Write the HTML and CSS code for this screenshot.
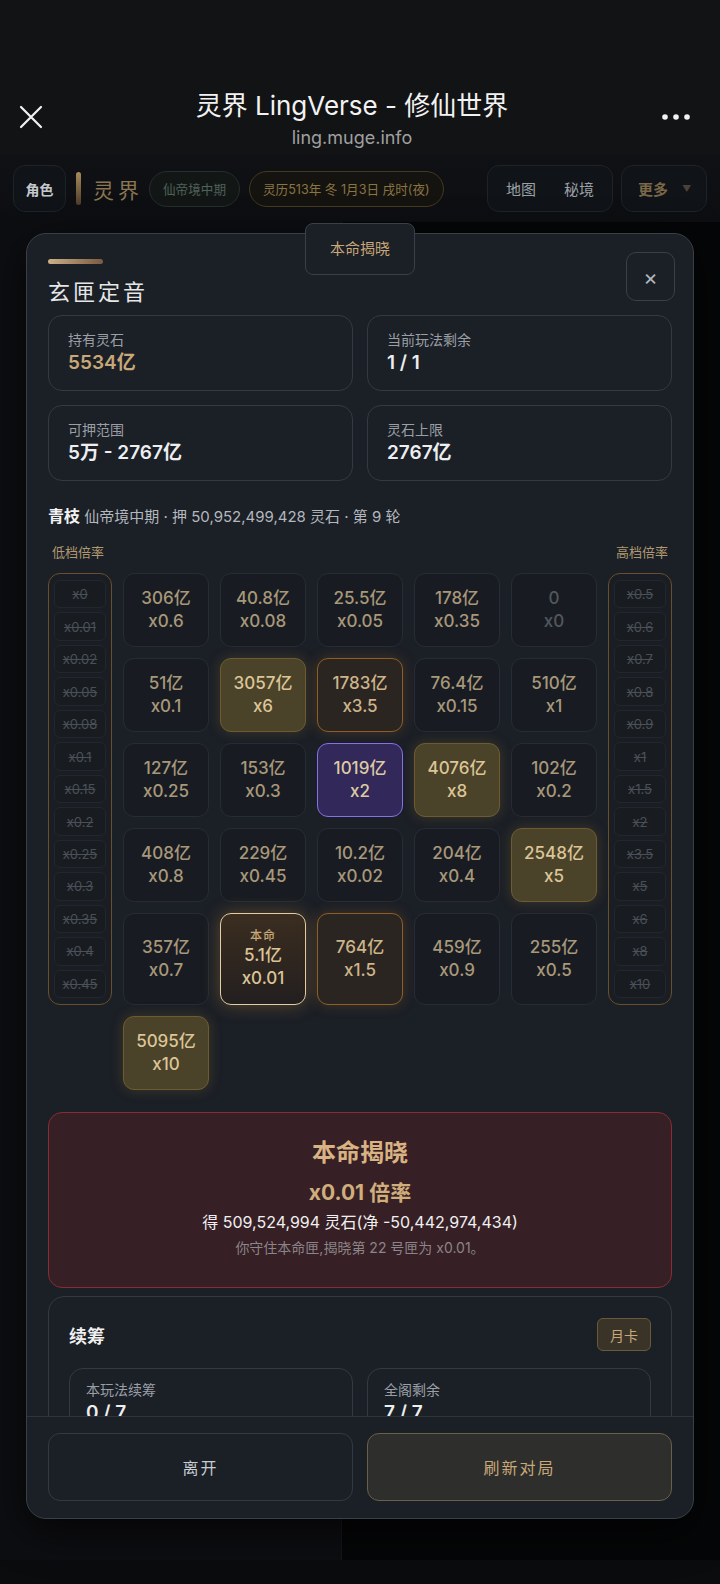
FILE: index.html
```html
<!DOCTYPE html>
<html lang="zh-CN">
<head>
    <meta charset="UTF-8">
    <meta name="viewport" content="width=device-width, initial-scale=1.0">
    <title>灵界 LingVerse - 修仙世界</title>
    <link rel="stylesheet" href="styles.css">
</head>
<body>
    <!-- browser bar -->
    <header class="browser-bar">
        <span class="bb-close">
            <svg width="24" height="24" viewBox="0 0 24 24"><path d="M2 2 L22 22 M22 2 L2 22" stroke="#f2f2f2" stroke-width="2.2" stroke-linecap="round" fill="none"/></svg>
        </span>
        <div class="bb-title">
            <div class="bb-name">灵界 LingVerse - 修仙世界</div>
            <div class="bb-url">ling.muge.info</div>
        </div>
        <span class="bb-more">
            <svg width="30" height="8" viewBox="0 0 30 8"><circle cx="4" cy="4" r="2.8" fill="#f2f2f2"/><circle cx="15" cy="4" r="2.8" fill="#f2f2f2"/><circle cx="26" cy="4" r="2.8" fill="#f2f2f2"/></svg>
        </span>
    </header>

    <nav class="app-nav">
        <div class="nav-btn">角色</div>
        <div class="brand"><span class="brand-bar"></span><span class="brand-name">灵界</span></div>
        <span class="pill pill-realm">仙帝境中期</span>
        <span class="pill pill-date">灵历513年 冬 1月3日 戌时(夜)</span>
        <div class="nav-group"><span>地图</span><span>秘境</span></div>
        <div class="nav-more"><span>更多</span><span class="caret">▼</span></div>
    </nav>

    <main class="page">
        <div class="page-left"></div>
        <div class="page-right"></div>
    </main>
    <div class="page-foot"></div>

    <!-- 玄匣定音 弹窗 -->
    <section class="modal">
        <div class="modal-tab">本命揭晓</div>
        <div class="modal-body">
            <div class="modal-head">
                <div>
                    <div class="head-bar"></div>
                    <h2 class="modal-title">玄匣定音</h2>
                </div>
                <button class="close-btn">×</button>
            </div>

            <div class="stats">
                <div class="stat"><div class="stat-label">持有灵石</div><div class="stat-value gold">5534亿</div></div>
                <div class="stat"><div class="stat-label">当前玩法剩余</div><div class="stat-value">1 / 1</div></div>
                <div class="stat"><div class="stat-label">可押范围</div><div class="stat-value">5万 - 2767亿</div></div>
                <div class="stat"><div class="stat-label">灵石上限</div><div class="stat-value">2767亿</div></div>
            </div>

            <p class="round-info"><b>青枝</b> 仙帝境中期 · 押 50,952,499,428 灵石 · 第 9 轮</p>

            <div class="tier-labels"><span>低档倍率</span><span>高档倍率</span></div>

            <div class="board">
                <div class="tier tier-low">
                    <span>x0</span><span>x0.01</span><span>x0.02</span><span>x0.05</span><span>x0.08</span><span>x0.1</span><span>x0.15</span><span>x0.2</span><span>x0.25</span><span>x0.3</span><span>x0.35</span><span>x0.4</span><span>x0.45</span>
                </div>

                <div class="box">306亿<br>x0.6</div>
                <div class="box">40.8亿<br>x0.08</div>
                <div class="box">25.5亿<br>x0.05</div>
                <div class="box">178亿<br>x0.35</div>
                <div class="box box-empty">0<br>x0</div>

                <div class="tier tier-high">
                    <span>x0.5</span><span>x0.6</span><span>x0.7</span><span>x0.8</span><span>x0.9</span><span>x1</span><span>x1.5</span><span>x2</span><span>x3.5</span><span>x5</span><span>x6</span><span>x8</span><span>x10</span>
                </div>

                <div class="box">51亿<br>x0.1</div>
                <div class="box box-gold">3057亿<br>x6</div>
                <div class="box box-amber">1783亿<br>x3.5</div>
                <div class="box">76.4亿<br>x0.15</div>
                <div class="box">510亿<br>x1</div>

                <div class="box">127亿<br>x0.25</div>
                <div class="box">153亿<br>x0.3</div>
                <div class="box box-pick">1019亿<br>x2</div>
                <div class="box box-gold">4076亿<br>x8</div>
                <div class="box">102亿<br>x0.2</div>

                <div class="box">408亿<br>x0.8</div>
                <div class="box">229亿<br>x0.45</div>
                <div class="box">10.2亿<br>x0.02</div>
                <div class="box">204亿<br>x0.4</div>
                <div class="box box-gold">2548亿<br>x5</div>

                <div class="box">357亿<br>x0.7</div>
                <div class="box box-own"><small>本命</small>5.1亿<br>x0.01</div>
                <div class="box box-amber">764亿<br>x1.5</div>
                <div class="box">459亿<br>x0.9</div>
                <div class="box">255亿<br>x0.5</div>

                <div class="box box-gold box-last">5095亿<br>x10</div>
            </div>

            <div class="result">
                <h3>本命揭晓</h3>
                <div class="result-rate">x0.01 倍率</div>
                <div class="result-gain">得 509,524,994 灵石(净 -50,442,974,434)</div>
                <div class="result-note">你守住本命匣,揭晓第 22 号匣为 x0.01。</div>
            </div>

            <div class="refill">
                <div class="refill-head">
                    <h3>续筹</h3>
                    <span class="tag">月卡</span>
                </div>
                <div class="refill-stats">
                    <div class="stat small"><div class="stat-label">本玩法续筹</div><div class="stat-value">0 / 7</div></div>
                    <div class="stat small"><div class="stat-label">全阁剩余</div><div class="stat-value">7 / 7</div></div>
                </div>
            </div>
        </div>

        <div class="modal-foot">
            <button class="btn">离开</button>
            <button class="btn btn-gold">刷新对局</button>
        </div>
    </section>
</body>
</html>
```

FILE: styles.css
```css
* {
    box-sizing: border-box;
}
body {
    margin: 0;
    width: 720px;
    height: 1584px;
    overflow: hidden;
    position: relative;
    background: #0b0c0e;
    font-family: Inter, "Noto Sans CJK SC", sans-serif;
    color: #e8e8e8;
}
button {
    font-family: inherit;
    cursor: pointer;
}

/* 浏览器标题栏 */
.browser-bar {
    height: 155px;
    background: #121315;
    display: flex;
    align-items: flex-start;
    padding: 89px 19px 0 19px;
}
.bb-close {
    width: 24px;
    height: 24px;
    margin-top: 16px;
}
.bb-close svg, .bb-more svg {
    display: block;
}
.bb-title {
    flex: 1;
    text-align: center;
}
.bb-name {
    font-size: 26px;
    line-height: 34px;
    font-weight: 400;
    color: #f2f2f2;
}
.bb-url {
    font-size: 18px;
    line-height: 26px;
    color: #a0a0a0;
    margin-top: 2px;
}
.bb-more {
    margin-top: 24px;
    margin-right: 10px;
}

/* 顶部导航 */
.app-nav {
    height: 67px;
    display: flex;
    align-items: center;
    padding: 0 13px;
    background: linear-gradient(180deg, #0f1114, #0c0e11);
}
.nav-btn {
    width: 53px;
    height: 47px;
    border: 1px solid #1e2329;
    border-radius: 12px;
    background: #101317;
    display: flex;
    align-items: center;
    justify-content: center;
    font-size: 14px;
    font-weight: 700;
    color: #c4c8cc;
}
.brand {
    display: flex;
    align-items: center;
    margin-left: 10px;
}
.brand-bar {
    width: 5px;
    height: 33px;
    border-radius: 3px;
    background: linear-gradient(180deg, #a88c5c, #4c3c28);
}
.brand-name {
    margin-left: 12px;
    font-size: 21px;
    letter-spacing: 4px;
    color: #8a7652;
}
.pill {
    height: 36px;
    border-radius: 18px;
    display: flex;
    align-items: center;
    padding: 0 13px;
    font-size: 12.6px;
    white-space: nowrap;
}
.pill-realm {
    margin-left: 6px;
    border: 1px solid #252e2c;
    background: #121716;
    color: #4f6159;
}
.pill-date {
    margin-left: 9px;
    border: 1px solid #453a1e;
    background: #14130f;
    color: #8a7442;
}
.nav-group {
    margin-left: auto;
    height: 47px;
    border: 1px solid #1e2329;
    border-radius: 12px;
    background: #101317;
    display: flex;
    align-items: center;
    gap: 28px;
    padding: 0 18px;
    font-size: 15px;
    color: #9aa0a6;
}
.nav-more {
    margin-left: 8px;
    width: 86px;
    height: 47px;
    border: 1px solid #1e2329;
    border-radius: 12px;
    background: #101317;
    display: flex;
    align-items: center;
    gap: 14px;
    padding-left: 16px;
    font-size: 15px;
    font-weight: 700;
    color: #7a6848;
}
.nav-more .caret {
    font-size: 9px;
    color: #4a4238;
}

/* 背景页面 */
.page {
    height: 1338px;
    display: flex;
}
.page-left {
    width: 341px;
    background: #0d0e11;
}
.page-right {
    flex: 1;
    background: #050607;
    border-left: 1px solid #15171a;
}
.page-foot {
    height: 24px;
    background: #0b0c0e;
}

/* 弹窗 */
.modal {
    position: absolute;
    left: 26px;
    top: 233px;
    width: 668px;
    height: 1286px;
    background: #1b1f26;
    border: 1px solid #3a4048;
    border-radius: 20px;
    box-shadow: 0 12px 40px #000a;
    display: flex;
    flex-direction: column;
}
.modal-tab {
    position: absolute;
    top: -11px;
    left: 278px;
    width: 110px;
    height: 52px;
    background: #1b1f26;
    border: 1px solid #3a4048;
    border-radius: 8px;
    display: flex;
    align-items: center;
    justify-content: center;
    padding-bottom: 4px;
    font-size: 15px;
    color: #c8a878;
    z-index: 2;
}
.modal-body {
    flex: 1;
    overflow: hidden;
    padding: 25px 21px 0 21px;
}
.modal-head {
    display: flex;
    justify-content: space-between;
    align-items: flex-start;
}
.head-bar {
    width: 55px;
    height: 5px;
    border-radius: 3px;
    background: linear-gradient(90deg, #cdb088, #7a5a42);
}
.modal-title {
    margin: 13px 0 0 0;
    font-size: 22px;
    line-height: 30px;
    font-weight: 400;
    letter-spacing: 3px;
    color: #e6e6e6;
}
.close-btn {
    width: 49px;
    height: 49px;
    margin-top: -7px;
    margin-right: -3px;
    background: #1b1f26;
    border: 1px solid #3a4048;
    border-radius: 10px;
    color: #b0b4ba;
    font-size: 22px;
    line-height: 1;
}

.stats {
    margin-top: 8px;
    display: grid;
    grid-template-columns: 1fr 1fr;
    gap: 14px;
}
.stat {
    border: 1px solid #333a44;
    border-radius: 14px;
    padding: 14px 19px 14px 19px;
}
.stat-label {
    font-size: 14px;
    line-height: 20px;
    color: #9a9fa6;
}
.stat-value {
    font-size: 19px;
    line-height: 26px;
    font-weight: 600;
    color: #eceef0;
}
.stat-value.gold {
    color: #c8a878;
}

.round-info {
    margin: 24px 0 0 0;
    font-size: 15px;
    line-height: 22px;
    color: #b4b8be;
}
.round-info b {
    font-size: 16px;
    color: #f2f2f2;
}
.tier-labels {
    margin-top: 15px;
    display: flex;
    justify-content: space-between;
    padding: 0 4px;
    font-size: 13px;
    line-height: 18px;
    color: #b09870;
}

/* 匣子棋盘 */
.board {
    margin-top: 12px;
    display: grid;
    grid-template-columns: 64px repeat(5, 86px) 64px;
    grid-template-rows: repeat(4, 74px) 92px 74px;
    gap: 11px;
}
.tier {
    grid-row: 1 / 6;
    border: 1px solid #6b4f2a;
    border-radius: 12px;
    background: #1a1e24;
    padding: 6px 5px;
    display: flex;
    flex-direction: column;
    gap: 4px;
}
.tier-low {
    grid-column: 1;
}
.tier-high {
    grid-column: 7;
}
.tier span {
    flex: 1;
    display: flex;
    align-items: center;
    justify-content: center;
    border: 1px solid #22272e;
    border-radius: 6px;
    background: #181c21;
    font-size: 13px;
    color: #4a5058;
    text-decoration: line-through;
}
.box {
    border: 1px solid #272c34;
    border-radius: 11px;
    background: #181c22;
    display: flex;
    flex-direction: column;
    align-items: center;
    justify-content: center;
    text-align: center;
    font-size: 17px;
    line-height: 23px;
    font-weight: 500;
    color: #a8987a;
}
.box-empty {
    color: #52575e;
}
.box-gold {
    background: #4a4229;
    border-color: #6e5c30;
    color: #dcc596;
    box-shadow: 0 0 14px rgba(190, 150, 60, 0.22);
}
.box-amber {
    background: #2a2520;
    border-color: #8c5f28;
    color: #cdb48a;
    box-shadow: 0 0 14px rgba(200, 120, 40, 0.25);
}
.box-pick {
    background: #33285a;
    border-color: #8472e6;
    color: #dccaa2;
}
.box-own {
    background: linear-gradient(180deg, #3b2d20, #231f1f);
    border: 1.5px solid #e4cca4;
    color: #dcc496;
    box-shadow: 0 0 18px rgba(210, 150, 60, 0.35);
}
.box-own small {
    font-size: 12px;
    line-height: 16px;
    color: #c8a878;
    letter-spacing: 1px;
}
.box-last {
    grid-column: 2;
}

/* 结果 */
.result {
    margin-top: 22px;
    border: 1px solid #8a2c34;
    border-radius: 14px;
    background: #361f25;
    text-align: center;
    padding: 24px 0 29px 0;
}
.result h3 {
    margin: 0;
    font-size: 24px;
    line-height: 32px;
    font-weight: 700;
    color: #d8b282;
}
.result-rate {
    margin-top: 10px;
    font-size: 21px;
    line-height: 28px;
    font-weight: 700;
    color: #d0ae7c;
}
.result-gain {
    margin-top: 4px;
    font-size: 16px;
    line-height: 22px;
    color: #f0f0f0;
}
.result-note {
    margin-top: 5px;
    font-size: 14px;
    line-height: 20px;
    color: #8c8488;
}

/* 续筹 */
.refill {
    margin-top: 8px;
    border: 1px solid #333a44;
    border-radius: 16px;
    padding: 21px 20px 20px 20px;
}
.refill-head {
    display: flex;
    justify-content: space-between;
    align-items: center;
}
.refill-head h3 {
    margin: 0;
    font-size: 18px;
    font-weight: 700;
    color: #f0f0f0;
}
.tag {
    width: 54px;
    height: 33px;
    border: 1px solid #6a5a3a;
    border-radius: 6px;
    background: #3a3428;
    display: flex;
    align-items: center;
    justify-content: center;
    font-size: 14px;
    color: #c8a878;
}
.refill-stats {
    margin-top: 17px;
    display: grid;
    grid-template-columns: 1fr 1fr;
    gap: 14px;
}
.stat.small {
    padding: 11px 16px;
}

/* 底部按钮 */
.modal-foot {
    border-top: 1px solid #2e343c;
    padding: 16px 21px 17px 21px;
    display: grid;
    grid-template-columns: 1fr 1fr;
    gap: 14px;
}
.btn {
    height: 68px;
    border: 1px solid #343a44;
    border-radius: 12px;
    background: #1b1f26;
    color: #c8ccd2;
    font-size: 16px;
    letter-spacing: 2px;
}
.btn-gold {
    background: #2e2e2c;
    border-color: #6a6048;
    color: #c8a878;
}
```
